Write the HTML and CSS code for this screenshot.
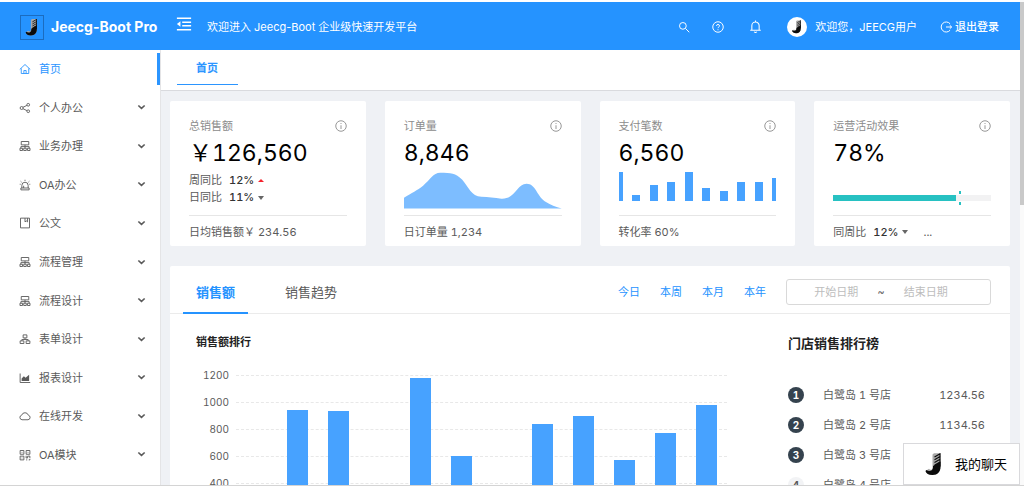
FILE: index.html
```html
<!DOCTYPE html>
<html lang="zh-CN">
<head>
<meta charset="utf-8">
<title>Jeecg-Boot Pro</title>
<link rel="stylesheet" href="styles.css">
</head>
<body>
<svg class="defs" aria-hidden="true">
  <symbol id="i-home" viewBox="0 0 16 16"><path d="M1 8.6 8 2l7 6.6M3 7.2V14h10V7.2M6.5 14v-4h3v4"/></symbol>
  <symbol id="i-share" viewBox="0 0 16 16"><circle cx="3.5" cy="8" r="2"/><circle cx="12.3" cy="3.7" r="1.8"/><circle cx="12.3" cy="12.3" r="1.8"/><path d="m5.3 7.1 5.3-2.6M5.3 8.9l5.3 2.6"/></symbol>
  <symbol id="i-cluster" viewBox="0 0 16 16"><path d="M3 2h10v4.500H3zM8 6.500V11M2.500 11V8.800h11V11M1.300 11h3.400v3H1.300zM6.300 11h3.400v3H6.300zM11.300 11h3.400v3h-3.400z"/></symbol>
  <symbol id="i-alert" viewBox="0 0 16 16"><path d="M3.800 12V8.500a4.200 4.200 0 0 1 8.400 0V12M2.500 12h11v2.500h-11zM8 1v1.500M2.200 3l1.200 1.200M13.800 3l-1.200 1.200M1 7h1.200M13.800 7H15M6.200 9v3"/></symbol>
  <symbol id="i-book" viewBox="0 0 16 16"><path d="M2 1.500h12v13H2zM8 1.500v5l1.700-1.300 1.700 1.300v-5"/></symbol>
  <symbol id="i-apartment" viewBox="0 0 16 16"><path d="M5.500 2.500h5v4h-5zM8 6.500v2.200M3.800 10.500V8.700h8.400v1.800M1.500 10.500h5v3.500h-5zM9.500 10.500h5v3.500h-5z"/></symbol>
  <symbol id="i-area" viewBox="0 0 16 16"><path d="M1.500 2v12h13.500"/><path class="solid" d="M3.500 12V8.500l3-3 2.300 2.300L13.500 3.500V12z"/></symbol>
  <symbol id="i-cloud" viewBox="0 0 16 16"><path d="M4 13a3.100 3.100 0 0 1-.4-6.100 4.600 4.600 0 0 1 8.800 0A3.100 3.100 0 0 1 12 13z"/></symbol>
  <symbol id="i-qr" viewBox="0 0 16 16"><path d="M1.500 2h5v5h-5zM9.500 2h5v5h-5zM1.500 9.500h5v5h-5zM3.500 4.500h1M11.500 4.500h1M3.500 12h1M9.500 9v3h2V9.500h3V12M9.500 14.500h1.500M13 14.500h1.500V13"/></symbol>
  <symbol id="i-down" viewBox="0 0 10 10"><path d="M1.500 2.800 5 6l3.500-3.200"/></symbol>
  <symbol id="i-info" viewBox="0 0 16 16"><circle cx="8" cy="8" r="7"/><path d="M8 7v5M8 4v1.300"/></symbol>
  <symbol id="i-j" viewBox="0 0 24 24"><path fill="#a8a8a8" d="M10.500 2 12 .8h6.500V14c0 5.500-3 8.500-8 8.500-4 0-6.200-1.500-7-4l3.500-2.300c1 1.800 3.500 1.500 3.500-1.500z"/><path fill="#0b0b0b" d="M11 13.500 18.500 9v5c0 5.500-3 8.500-8 8.500-4 0-6.200-1.500-7-4l1-1c2.500 2 6 1 6.500-2z"/><path class="hatch" d="m12.500 4.500 6-3.500M12.500 7.300l6-3.500M12.500 10l6-3.500M12.500 12.700l6-3.500M18 1v13"/></symbol>
</svg>
<div class="screen">
  <div class="app">
    <header class="header">
      <a class="brand" href="#"><span class="logo"><svg viewBox="0 0 24 24"><use href="#i-j"/></svg></span>Jeecg-Boot Pro</a>
      <button class="fold" type="button" aria-label="折叠菜单"><svg viewBox="0 0 18 16"><path d="M1 1.500h16M7 6h10M7 10h10M1 14.500h16"/><path class="solid" d="M1 8l4-3v6z"/></svg></button>
      <span class="welcome">欢迎进入 Jeecg-Boot 企业级快速开发平台</span>
      <nav class="tools">
        <button class="tool" type="button" aria-label="搜索"><svg viewBox="0 0 16 16"><circle cx="6.500" cy="6.500" r="4.500"/><path d="m10 10 5 5"/></svg></button>
        <button class="tool" type="button" aria-label="帮助"><svg viewBox="0 0 16 16"><circle cx="8" cy="8" r="7"/><path d="M6 6.500c0-2.600 4-2.600 4 0 0 1.500-2 1.500-2 3M8 11v1.300"/></svg></button>
        <button class="tool bell" type="button" aria-label="通知"><svg viewBox="0 0 16 16"><path d="M3.500 12.500V7a4.500 4.500 0 0 1 9 0v5.500M1.500 12.700h13M8 .5v2M6.300 14.500c.8 1.200 2.600 1.200 3.400 0"/></svg></button>
        <a class="user" href="#"><span class="avatar"><svg viewBox="0 0 24 24"><use href="#i-j"/></svg></span>欢迎您，JEECG用户</a>
        <a class="logout" href="#"><svg viewBox="0 0 16 16"><path d="M13.500 3.800a6.700 6.700 0 1 0 0 8.400M8 8h7.500M13 5.700 15.500 8 13 10.300"/></svg>退出登录</a>
      </nav>
    </header>
    <div class="body">
      <aside class="sidebar">
        <ul class="menu">
          <li class="item"><a class="link active" href="#"><svg class="icon"><use href="#i-home"/></svg>首页</a></li>
          <li class="item"><a class="link" href="#"><svg class="icon"><use href="#i-share"/></svg>个人办公<svg class="arrow"><use href="#i-down"/></svg></a></li>
          <li class="item"><a class="link" href="#"><svg class="icon"><use href="#i-cluster"/></svg>业务办理<svg class="arrow"><use href="#i-down"/></svg></a></li>
          <li class="item"><a class="link" href="#"><svg class="icon"><use href="#i-alert"/></svg>OA办公<svg class="arrow"><use href="#i-down"/></svg></a></li>
          <li class="item"><a class="link" href="#"><svg class="icon"><use href="#i-book"/></svg>公文<svg class="arrow"><use href="#i-down"/></svg></a></li>
          <li class="item"><a class="link" href="#"><svg class="icon"><use href="#i-cluster"/></svg>流程管理<svg class="arrow"><use href="#i-down"/></svg></a></li>
          <li class="item"><a class="link" href="#"><svg class="icon"><use href="#i-cluster"/></svg>流程设计<svg class="arrow"><use href="#i-down"/></svg></a></li>
          <li class="item"><a class="link" href="#"><svg class="icon"><use href="#i-apartment"/></svg>表单设计<svg class="arrow"><use href="#i-down"/></svg></a></li>
          <li class="item"><a class="link" href="#"><svg class="icon"><use href="#i-area"/></svg>报表设计<svg class="arrow"><use href="#i-down"/></svg></a></li>
          <li class="item"><a class="link" href="#"><svg class="icon"><use href="#i-cloud"/></svg>在线开发<svg class="arrow"><use href="#i-down"/></svg></a></li>
          <li class="item"><a class="link" href="#"><svg class="icon"><use href="#i-qr"/></svg>OA模块<svg class="arrow"><use href="#i-down"/></svg></a></li>
        </ul>
      </aside>
      <main class="main">
        <nav class="pages"><a class="page" href="#">首页</a></nav>
        <div class="content">
          <section class="stats">
            <article class="card">
              <h2 class="label">总销售额<svg class="info"><use href="#i-info"/></svg></h2>
              <p class="number">￥126,560</p>
              <div class="visual">
                <p class="trend">周同比<b class="pct">12%</b><i class="up"></i></p>
                <p class="trend">日同比<b class="pct">11%</b><i class="down"></i></p>
              </div>
              <p class="foot">日均销售额￥ 234.56</p>
            </article>
            <article class="card">
              <h2 class="label">订单量<svg class="info"><use href="#i-info"/></svg></h2>
              <p class="number">8,846</p>
              <div class="visual">
                <svg class="area" viewBox="0 0 157 38" preserveAspectRatio="none"><path d="M0 26.500C8 21 13 19 19 14 26 8 29 .8 36 .8 47 .8 51 1 58 8 64 15 67 25 77 25.500 84 26 90 26.500 97 27.500 111 28 112 12 122 12 131 12 132 24 140 30 146 34 151 36 157 37.500H0z"/></svg>
              </div>
              <p class="foot">日订单量 1,234</p>
            </article>
            <article class="card">
              <h2 class="label">支付笔数<svg class="info"><use href="#i-info"/></svg></h2>
              <p class="number">6,560</p>
              <div class="visual">
                <div class="minibars">
                  <span class="mini half" style="height:100%"></span><span class="mini" style="height:22%"></span><span class="mini" style="height:56%"></span><span class="mini" style="height:67%"></span><span class="mini" style="height:100%"></span><span class="mini" style="height:44%"></span><span class="mini" style="height:34%"></span><span class="mini" style="height:67%"></span><span class="mini" style="height:67%"></span><span class="mini half" style="height:78%"></span>
                </div>
              </div>
              <p class="foot">转化率 60%</p>
            </article>
            <article class="card">
              <h2 class="label">运营活动效果<svg class="info"><use href="#i-info"/></svg></h2>
              <p class="number">78%</p>
              <div class="visual">
                <div class="progress"><div class="track"><div class="fill" style="width:78%"></div></div><i class="target" style="left:80%"></i></div>
              </div>
              <p class="foot">同周比<b class="pct">12%</b><i class="down"></i><span class="more">...</span></p>
            </article>
          </section>
          <section class="panel">
            <div class="bar">
              <a class="tab on" href="#">销售额</a>
              <a class="tab" href="#">销售趋势</a>
              <div class="filters">
                <a class="range" href="#">今日</a><a class="range" href="#">本周</a><a class="range" href="#">本月</a><a class="range" href="#">本年</a>
                <div class="picker"><input class="date" type="text" placeholder="开始日期" aria-label="开始日期"><span>~</span><input class="date" type="text" placeholder="结束日期" aria-label="结束日期"></div>
              </div>
            </div>
            <div class="sales">
              <div class="chartbox">
                <h3 class="charttitle">销售额排行</h3>
                <div class="chart">
                  <div class="axis"><span>1200</span><span>1000</span><span>800</span><span>600</span><span>400</span></div>
                  <div class="plot">
                    <div class="grid"><i></i><i></i><i></i><i></i><i></i><i></i></div>
                    <div class="bars">
                      <span class="slot"><i class="col" style="height:25%"></i></span><span class="slot"><i class="col" style="height:78.500%"></i></span><span class="slot"><i class="col" style="height:78%"></i></span><span class="slot"><i class="col" style="height:25%"></i></span><span class="slot"><i class="col" style="height:98%"></i></span><span class="slot"><i class="col" style="height:50%"></i></span><span class="slot"><i class="col" style="height:25%"></i></span><span class="slot"><i class="col" style="height:69.800%"></i></span><span class="slot"><i class="col" style="height:75%"></i></span><span class="slot"><i class="col" style="height:47.500%"></i></span><span class="slot"><i class="col" style="height:64.200%"></i></span><span class="slot"><i class="col" style="height:81.500%"></i></span>
                    </div>
                  </div>
                </div>
              </div>
              <div class="ranking">
                <h3 class="ranktitle">门店销售排行榜</h3>
                <ol class="ranks">
                  <li class="rank"><span class="no top">1</span>白鹭岛 1 号店<span class="val">1234.56</span></li>
                  <li class="rank"><span class="no top">2</span>白鹭岛 2 号店<span class="val">1134.56</span></li>
                  <li class="rank"><span class="no top">3</span>白鹭岛 3 号店</li>
                  <li class="rank"><span class="no">4</span>白鹭岛 4 号店</li>
                </ol>
              </div>
            </div>
          </section>
        </div>
      </main>
    </div>
    <button class="chat" type="button"><svg viewBox="0 0 24 24"><use href="#i-j"/></svg>我的聊天</button>
  </div>
  <div class="scroll"><div class="thumb"></div></div>
</div>
</body>
</html>
```
FILE: styles.css
```css
* { box-sizing: border-box; }
body, h2, h3, p, ul, ol { margin: 0; padding: 0; }
body {
  font: 11px/18px Inter, "Noto Sans CJK SC", sans-serif;
  font-variant-numeric: tabular-nums;
  color: #5a5a5a;
  background: #fff;
}
a { color: inherit; text-decoration: none; }
ul, ol { list-style: none; }
button { border: 0; padding: 0; background: none; color: inherit; font: inherit; }
svg { display: block; flex: none; fill: none; stroke: currentColor; }
.solid { fill: currentColor; stroke: none; }
.hatch { fill: none; stroke: #0b0b0b; stroke-width: 1.1; }
.defs { position: absolute; width: 0; height: 0; }
.logo svg, .avatar svg, .chat svg { stroke: none; }

.screen { display: flex; height: 100vh; overflow: hidden; border-bottom: 1px solid #d4d4d4; }
.app { position: relative; flex: 1; min-width: 0; display: flex; flex-direction: column; padding-top: 2px; }
.scroll { width: 4px; background: #fafafa; padding-top: 2px; }
.thumb { height: 42%; background: #c9c9c9; }

.header { flex: none; display: flex; align-items: center; height: 48px; padding: 0 21px 0 20px; background: #2593ff; color: #fff; font-variant-numeric: normal; }
.brand { display: flex; align-items: center; gap: 7px; width: 156px; padding-top: 2px; font-size: 14px; font-weight: 700; white-space: nowrap; }
.logo { flex: none; width: 24px; height: 25px; padding: 2px; border: 1px solid #1b6cc0; }
.logo svg { width: 18px; height: 19px; }
.fold { margin-bottom: 4px; }
.fold svg { width: 16px; height: 16px; stroke-width: 1.8; }
.welcome { margin-left: 15px; padding-top: 1px; }
.tools { margin-left: auto; display: flex; align-items: center; padding-top: 1px; }
.tool { margin-right: 22px; }
.tool svg { width: 12px; height: 12px; stroke-width: 1.3; }
.tool.bell { margin: 0 25px 0 3px; }
.tool.bell svg { width: 13px; height: 13px; }
.user { display: flex; align-items: center; gap: 8px; }
.avatar { width: 20px; height: 20px; padding: 3px; border-radius: 50%; background: #fff; }
.avatar svg { width: 14px; height: 14px; }
.logout { display: flex; align-items: center; gap: 3px; margin-left: 23px; font-weight: 500; }
.logout svg { width: 12px; height: 12px; stroke-width: 1.3; }

.body { flex: 1; min-height: 0; display: flex; }
.sidebar { flex: none; width: 161px; padding-bottom: 11px; background: #fff; border-right: 1px solid #e4e4e6; }
.menu { height: 100%; display: flex; flex-direction: column; }
.item { flex: 1; display: flex; align-items: center; }
.link { flex: 1; display: flex; align-items: center; height: 32px; padding: 0 11px 0 19px; border-right: 3px solid transparent; }
.link.active { color: #2b95ff; border-right-color: #2b95ff; }
.icon { width: 12px; height: 12px; margin-right: 8px; stroke-width: 1.2; }
.arrow { width: 9px; height: 9px; margin-left: auto; stroke-width: 1.8; }

.main { flex: 1; min-width: 0; overflow: hidden; background: #eff1f5; }
.pages { display: flex; height: 41px; padding: 0 16px; background: #fff; border-bottom: 1px solid #d9dade; }
.page { align-self: flex-start; padding: 9px 20px 7px 19px; border-bottom: 1px solid #2b95ff; color: #2b95ff; font-weight: 600; }
.content { padding: 10px 10px 0 9px; }

.stats { display: grid; grid-template-columns: repeat(4, 1fr); gap: 19px; }
.card { padding: 16px 19px 5px; background: #fff; border-radius: 2px; }
.label { display: flex; align-items: center; justify-content: space-between; font-size: 11px; font-weight: 400; color: #8c8c8c; }
.info { width: 12px; height: 12px; stroke-width: 1.2; }
.number { font-size: 23px; line-height: 37px; color: #000; white-space: nowrap; }
.visual { display: flow-root; height: 43px; }
.trend { display: flex; align-items: center; line-height: 17px; }
.pct { margin: 0 4px 0 7px; font-weight: 500; color: #333; }
.up, .down { border: 3px solid transparent; }
.up { border-top: 0; border-bottom-color: #f5222d; }
.down { border-bottom: 0; border-top: 4px solid #666; }
.foot { display: flex; align-items: center; padding-top: 7px; border-top: 1px solid #e6e6e6; white-space: pre; }
.more { margin-left: 15px; }
.area { width: 100%; height: 37px; stroke: none; fill: #7dbdff; }
.minibars { display: flex; align-items: flex-end; justify-content: space-between; height: 29px; }
.mini { width: 8px; background: #47a2ff; }
.mini.half { width: 4px; }
.progress { position: relative; margin-top: 18px; padding: 5px 0; }
.track { height: 6px; background: #f2f2f3; }
.fill { height: 6px; background: #27c1c2; }
.target { position: absolute; top: 1px; width: 2px; height: 14px; border: solid #27c1c2; border-width: 3px 0; }

.panel { margin-top: 20px; background: #fff; border-radius: 2px; }
.bar { display: flex; height: 48px; padding: 0 19px 0 13px; border-bottom: 1px solid #ebebeb; }
.tab { height: 48px; padding: 0 13px; margin-right: 24px; font-size: 13px; line-height: 52px; border-bottom: 2px solid transparent; }
.tab.on { color: #2593ff; border-color: #2593ff; font-weight: 600; }
.filters { display: flex; align-items: center; margin-left: auto; gap: 20px; padding-top: 4px; color: #2593ff; }
.picker { display: flex; align-items: center; width: 205px; height: 26px; padding: 0 23px 0 8px; border: 1px solid #d9d9d9; border-radius: 3px; color: #666; }
.date { flex: 1; width: 60px; min-width: 0; padding: 0; border: 0; background: none; font: inherit; text-align: center; }
.date::placeholder { color: #bdbdbd; }

.sales { display: flex; padding: 19px 25px 0 26px; }
.chartbox { flex: 1; }
.charttitle { font-size: 11px; line-height: 18px; font-weight: 600; color: #222; }
.chart { display: flex; padding: 15px 61px 0 0; }
.axis { width: 33px; font-size: 10px; text-align: right; }
.axis span { display: block; height: 27px; }
.plot { flex: 1; display: grid; margin: 9px 0 0 7px; }
.grid, .bars { grid-area: 1 / 1; }
.grid i { display: block; height: 27px; border-top: 1px dashed #e8e8e8; }
.bars { display: flex; height: 162px; z-index: 1; }
.slot { flex: 1; display: flex; align-items: flex-end; justify-content: center; }
.col { width: 21px; background: #47a2ff; }
.ranking { flex: none; width: 197px; }
.ranktitle { font-size: 13px; line-height: 20px; font-weight: 600; color: #222; }
.ranks { padding-top: 27px; }
.rank { display: flex; align-items: center; height: 30px; }
.no { width: 16px; height: 16px; margin-right: 19px; border-radius: 50%; background: #f2f3f5; font-size: 10px; line-height: 16px; font-weight: 700; text-align: center; }
.no.top { background: #35424e; color: #fff; }
.val { margin-left: auto; }

.chat { position: absolute; right: 0; bottom: 0; z-index: 2; display: flex; align-items: center; gap: 9px; height: 42px; padding: 0 12px 0 18px; border: 1px solid #d9d9dc; background: #fff; color: #000; font-size: 13px; }
.chat svg { width: 24px; height: 25px; }
```
